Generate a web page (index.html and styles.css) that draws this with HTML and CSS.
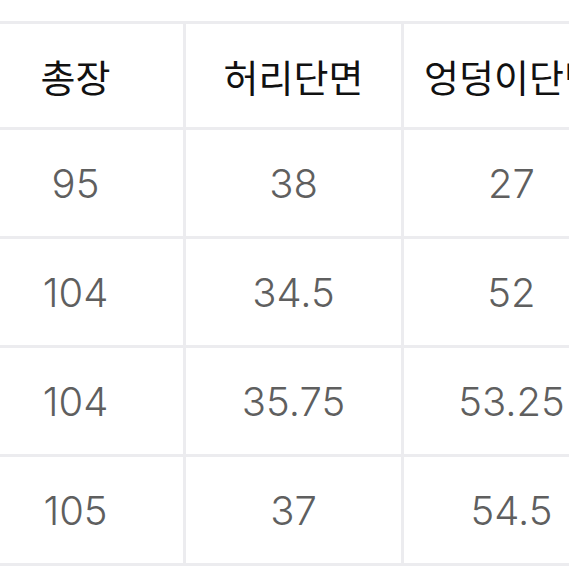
FILE: index.html
```html
<!DOCTYPE html>
<html lang="ko">
<head>
<meta charset="utf-8">
<link rel="stylesheet" href="styles.css">
</head>
<body>
<table class="size-table">
  <thead>
    <tr class="head-row">
      <th>총장</th>
      <th>허리단면</th>
      <th>엉덩이단면</th>
    </tr>
  </thead>
  <tbody>
    <tr><td>95</td><td>38</td><td>27</td></tr>
    <tr><td>104</td><td>34.5</td><td>52</td></tr>
    <tr><td>104</td><td>35.75</td><td>53.25</td></tr>
    <tr><td>105</td><td>37</td><td>54.5</td></tr>
  </tbody>
</table>
</body>
</html>
```
FILE: styles.css
```css
html, body {
  margin: 0;
  padding: 0;
  background: #ffffff;
  overflow: hidden;
}
body {
  padding-top: 21px;
}
.size-table {
  border-collapse: separate;
  border-spacing: 0;
  table-layout: fixed;
  width: 657px;
  margin-left: -35px;
  border-top: 3px solid #ececef;
  border-left: 3px solid #ececef;
}
.size-table th,
.size-table td {
  width: 215px;
  padding: 0;
  border-right: 3px solid #ececef;
  border-bottom: 3px solid #ececef;
  text-align: center;
  vertical-align: middle;
  white-space: nowrap;
  overflow: hidden;
}
.size-table th {
  height: 103px;
  font-family: "Noto Sans CJK KR", "Noto Sans", sans-serif;
  font-weight: 400;
  font-size: 38px;
  color: #111111;
}
.size-table td {
  height: 106px;
  font-family: Inter, "Liberation Sans", sans-serif;
  font-weight: 350;
  font-size: 40px;
  color: #5f5f5f;
}
```
